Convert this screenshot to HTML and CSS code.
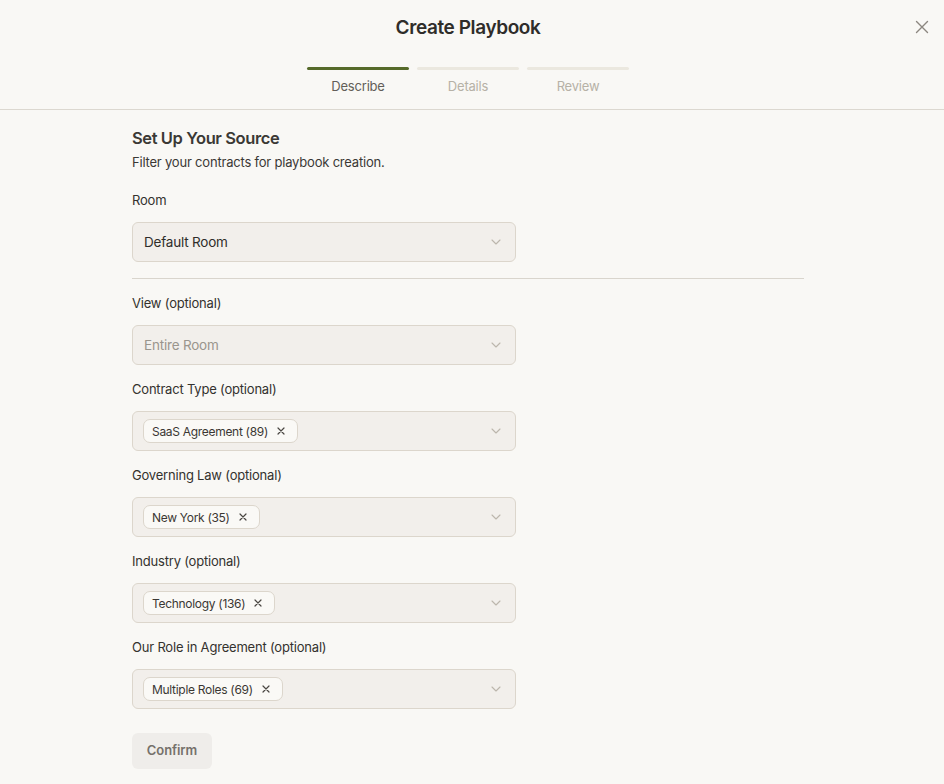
FILE: index.html
```html
<!DOCTYPE html>
<html lang="en">
<head>
<meta charset="UTF-8">
<title>Create Playbook</title>
<link rel="stylesheet" href="styles.css">
</head>
<body>
<div class="modal">
  <header class="modal-head">
    <h1>Create Playbook</h1>
    <button class="close" aria-label="Close">
      <svg width="14" height="14" viewBox="0 0 14 14"><path d="M1.5 1.5l11 11M12.5 1.5l-11 11" stroke="currentColor" stroke-width="1.4" stroke-linecap="round"/></svg>
    </button>
    <ol class="steps">
      <li class="step active"><span class="bar"></span>Describe</li>
      <li class="step"><span class="bar"></span>Details</li>
      <li class="step"><span class="bar"></span>Review</li>
    </ol>
  </header>

  <main class="modal-body">
    <h2>Set Up Your Source</h2>
    <p class="sub">Filter your contracts for playbook creation.</p>

    <div class="field">
      <label>Room</label>
      <div class="select">
        <span class="value">Default Room</span>
        <svg class="chev" width="10" height="6" viewBox="0 0 10 6"><path d="M1 1l4 4 4-4" fill="none" stroke="currentColor" stroke-width="1.1" stroke-linecap="round" stroke-linejoin="round"/></svg>
      </div>
    </div>

    <hr class="divider">

    <div class="field">
      <label>View (optional)</label>
      <div class="select">
        <span class="value muted">Entire Room</span>
        <svg class="chev" width="10" height="6" viewBox="0 0 10 6"><path d="M1 1l4 4 4-4" fill="none" stroke="currentColor" stroke-width="1.1" stroke-linecap="round" stroke-linejoin="round"/></svg>
      </div>
    </div>

    <div class="field">
      <label>Contract Type (optional)</label>
      <div class="select">
        <span class="chip">SaaS Agreement (89)<svg width="8" height="8" viewBox="0 0 8 8"><path d="M1 1l6 6M7 1L1 7" stroke="currentColor" stroke-width="1.2" stroke-linecap="round"/></svg></span>
        <svg class="chev" width="10" height="6" viewBox="0 0 10 6"><path d="M1 1l4 4 4-4" fill="none" stroke="currentColor" stroke-width="1.1" stroke-linecap="round" stroke-linejoin="round"/></svg>
      </div>
    </div>

    <div class="field">
      <label>Governing Law (optional)</label>
      <div class="select">
        <span class="chip">New York (35)<svg width="8" height="8" viewBox="0 0 8 8"><path d="M1 1l6 6M7 1L1 7" stroke="currentColor" stroke-width="1.2" stroke-linecap="round"/></svg></span>
        <svg class="chev" width="10" height="6" viewBox="0 0 10 6"><path d="M1 1l4 4 4-4" fill="none" stroke="currentColor" stroke-width="1.1" stroke-linecap="round" stroke-linejoin="round"/></svg>
      </div>
    </div>

    <div class="field">
      <label>Industry (optional)</label>
      <div class="select">
        <span class="chip">Technology (136)<svg width="8" height="8" viewBox="0 0 8 8"><path d="M1 1l6 6M7 1L1 7" stroke="currentColor" stroke-width="1.2" stroke-linecap="round"/></svg></span>
        <svg class="chev" width="10" height="6" viewBox="0 0 10 6"><path d="M1 1l4 4 4-4" fill="none" stroke="currentColor" stroke-width="1.1" stroke-linecap="round" stroke-linejoin="round"/></svg>
      </div>
    </div>

    <div class="field">
      <label>Our Role in Agreement (optional)</label>
      <div class="select">
        <span class="chip">Multiple Roles (69)<svg width="8" height="8" viewBox="0 0 8 8"><path d="M1 1l6 6M7 1L1 7" stroke="currentColor" stroke-width="1.2" stroke-linecap="round"/></svg></span>
        <svg class="chev" width="10" height="6" viewBox="0 0 10 6"><path d="M1 1l4 4 4-4" fill="none" stroke="currentColor" stroke-width="1.1" stroke-linecap="round" stroke-linejoin="round"/></svg>
      </div>
    </div>

    <button class="confirm">Confirm</button>
  </main>
</div>
</body>
</html>
```

FILE: styles.css
```css
html, body {
  margin: 0;
  background: #f9f8f5;
}
body {
  font-family: Inter, "Noto Sans", sans-serif;
  color: #2f2d2a;
  font-size: 13px;
  letter-spacing: -0.2px;
}
.modal-head {
  position: relative;
  padding: 14px 8px 14px 0;
  border-bottom: 1px solid #dcd8d0;
  display: flex;
  flex-direction: column;
  align-items: center;
}
.modal-head h1 {
  margin: 0;
  font-size: 19px;
  line-height: 28px;
  font-weight: 600;
  letter-spacing: -0.4px;
}
.close {
  position: absolute;
  top: 20px;
  right: 15px;
  background: none;
  border: 0;
  padding: 0;
  color: #8c8780;
  display: flex;
}
.steps {
  list-style: none;
  margin: 25px 0 0;
  padding: 0;
  display: flex;
  gap: 8px;
}
.step {
  width: 102px;
  display: flex;
  flex-direction: column;
  align-items: center;
  gap: 7px;
  line-height: 18px;
  color: #b6b1a6;
}
.step .bar {
  align-self: stretch;
  height: 3px;
  border-radius: 2px;
  background: #ebe8df;
}
.step.active { color: #625e58; }
.step.active .bar { background: #566a2a; }

.modal-body {
  width: 672px;
  margin: 0 0 0 132px;
  padding-top: 16px;
}
.modal-body h2 {
  margin: 0;
  font-size: 16.5px;
  line-height: 24px;
  font-weight: 600;
  color: #3b3935;
  letter-spacing: -0.4px;
}
.sub {
  margin: 2px 0 18px;
  line-height: 20px;
  color: #3b3935;
}
.field {
  display: flex;
  flex-direction: column;
  gap: 12px;
  margin-bottom: 14px;
}
.field label {
  line-height: 20px;
  color: #34322e;
}
.select {
  box-sizing: border-box;
  width: 384px;
  height: 40px;
  padding: 0 14px 0 10px;
  display: flex;
  align-items: center;
  background: #f2efeb;
  border: 1px solid #dcd6cc;
  border-radius: 6px;
}
.select .value {
  flex: 1;
  padding-left: 1px;
  font-size: 13.5px;
}
.select .muted { color: #9a958d; }
.chev {
  margin-left: auto;
  color: #bcb6ac;
}
.chip {
  display: inline-flex;
  align-items: center;
  gap: 9px;
  height: 24px;
  box-sizing: border-box;
  padding: 0 12px 0 8px;
  background: #faf9f6;
  border: 1px solid #dcd6cc;
  border-radius: 7px;
  font-size: 12px;
  letter-spacing: -0.3px;
  color: #3a3733;
}
.chip svg { color: #4a4743; }
.divider {
  border: 0;
  border-top: 1px solid #d9d5cd;
  margin: 16px 0 14px;
}
.confirm {
  margin-top: 10px;
  width: 80px;
  height: 36px;
  padding: 0 0 2px;
  border: 0;
  border-radius: 6px;
  background: #efedea;
  color: #75716a;
  font: 600 13px Inter, "Noto Sans", sans-serif;
  letter-spacing: -0.1px;
}
```
